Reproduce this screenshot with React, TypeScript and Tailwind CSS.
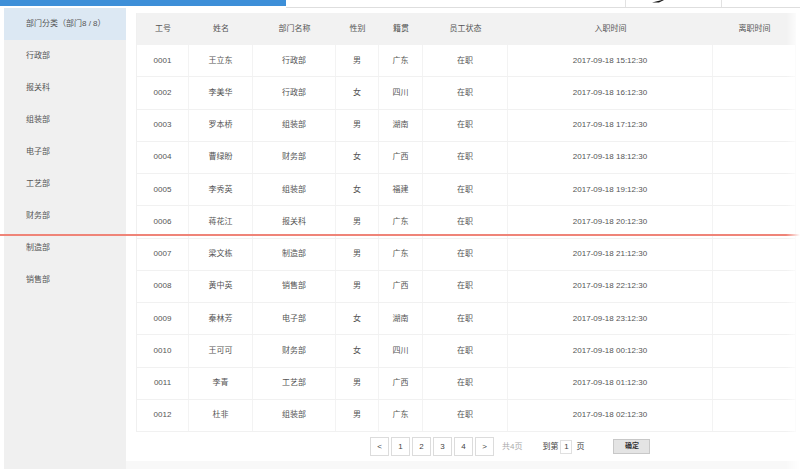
import React from 'react';

const font = { fontFamily: '"Liberation Sans", "Noto Sans CJK SC", sans-serif' };

const depts = ['行政部', '报关科', '组装部', '电子部', '工艺部', '财务部', '制造部', '销售部'];

const cols = [
  { title: '工号', w: 'w-[52px]' },
  { title: '姓名', w: 'w-[64px]' },
  { title: '部门名称', w: 'w-[83px]' },
  { title: '性别', w: 'w-[43px]' },
  { title: '籍贯', w: 'w-[44px]' },
  { title: '员工状态', w: 'w-[85px]' },
  { title: '入职时间', w: 'w-[205px]' },
  { title: '离职时间', w: 'flex-1' },
];

const rows = [
  ['0001', '王立东', '行政部', '男', '广东', '在职', '2017-09-18 15:12:30'],
  ['0002', '李美华', '行政部', '女', '四川', '在职', '2017-09-18 16:12:30'],
  ['0003', '罗本桥', '组装部', '男', '湖南', '在职', '2017-09-18 17:12:30'],
  ['0004', '曹绿盼', '财务部', '女', '广西', '在职', '2017-09-18 18:12:30'],
  ['0005', '李秀英', '组装部', '女', '福建', '在职', '2017-09-18 19:12:30'],
  ['0006', '蒋花江', '报关科', '男', '广东', '在职', '2017-09-18 20:12:30'],
  ['0007', '梁文栋', '制造部', '男', '广东', '在职', '2017-09-18 21:12:30'],
  ['0008', '黄中英', '销售部', '男', '广西', '在职', '2017-09-18 22:12:30'],
  ['0009', '秦林芳', '电子部', '女', '湖南', '在职', '2017-09-18 23:12:30'],
  ['0010', '王可可', '财务部', '女', '四川', '在职', '2017-09-18 00:12:30'],
  ['0011', '李青', '工艺部', '男', '广西', '在职', '2017-09-18 01:12:30'],
  ['0012', '杜非', '组装部', '男', '广东', '在职', '2017-09-18 02:12:30'],
];

function PageBtn({ label }: { label: string }) {
  return (
    <div className="w-[19px] h-[19px] border border-[#dcdcdc] bg-white flex items-center justify-center text-[8px] text-[#444]">
      {label}
    </div>
  );
}

export default function App() {
  return (
    <div className="relative w-[800px] h-[469px] overflow-hidden bg-white text-[#555]" style={font}>
      {/* top strip */}
      <div className="flex h-[8px]">
        <div className="w-[286px] h-[6px] bg-[#3d8fd8]" />
        <div className="flex-1 flex border-b border-[#dedede]">
          <div className="w-[339px]" />
          <div className="w-[97px] border-x border-[#e2e2e2] relative">
            <svg className="absolute left-[26px] top-0" width="12" height="3" viewBox="0 0 12 3">
              <path d="M0 2.5 L10 0 L12 0 L7 2.5 Z" fill="#111" />
            </svg>
          </div>
          <div className="flex-1" />
        </div>
      </div>

      <div className="flex h-[461px]">
        {/* sidebar */}
        <div className="ml-[4px] w-[122px] bg-[#f0f0f0] flex flex-col">
          <div className="h-[32px] bg-[#dce8f3] pl-[22px] flex items-center text-[8px] text-[#555]">
            部门分类（部门8 / 8）
          </div>
          {depts.map((d) => (
            <div key={d} className="h-[32px] pl-[22px] flex items-center text-[8px] text-[#555]">
              {d}
            </div>
          ))}
        </div>

        {/* main */}
        <div className="flex-1 flex flex-col pl-[10px] pt-[5px]">
          <div className="w-[660px] border-l border-[#f0f0f0]">
            <div className="flex h-[32px] bg-[#f2f2f2]">
              {cols.map((c) => (
                <div key={c.title} className={`${c.w} flex items-center justify-center text-[8px] text-[#555]`}>
                  {c.title}
                </div>
              ))}
            </div>
            {rows.map((r) => (
              <div key={r[0]} className="flex h-[32.25px] border-b border-[#f1f1f1]">
                {cols.map((c, i) => (
                  <div
                    key={c.title}
                    className={`${c.w} flex items-center justify-center text-[8px] text-[#555] border-r border-[#f3f3f3]`}
                  >
                    {r[i] ?? ''}
                  </div>
                ))}
              </div>
            ))}
          </div>

          {/* pagination */}
          <div className="flex items-center h-[19px] mt-[5px] pl-[234px] text-[8px]">
            <div className="flex gap-[2px]">
              {['<', '1', '2', '3', '4', '>'].map((p) => (
                <PageBtn key={p} label={p} />
              ))}
            </div>
            <span className="ml-[8px] text-[#aaa]">共4页</span>
            <span className="ml-[20px] text-[#444]">到第</span>
            <div className="ml-[2px] w-[12px] h-[14px] border border-[#e0e0e0] flex items-center justify-center text-[#444]">
              1
            </div>
            <span className="ml-[4px] text-[#444]">页</span>
            <div className="ml-[29px] w-[37px] h-[15px] bg-[#e4e4e4] border border-[#c8c8c8] flex items-center justify-center font-bold text-[7px] text-[#333]">
              确定
            </div>
          </div>
          <div className="flex-1" />
        </div>
      </div>

      {/* bottom band */}
      <div className="absolute left-[126px] right-0 bottom-0 h-[8px] bg-[#f8f8f8]" />

      {/* red guide line */}
      <div className="absolute left-0 right-0 top-[234px] h-[2px] bg-[#ef8478]" />

      {/* right fade */}
      <div className="absolute top-[8px] right-0 bottom-0 w-[14px] bg-gradient-to-r from-transparent to-white" />
    </div>
  );
}
